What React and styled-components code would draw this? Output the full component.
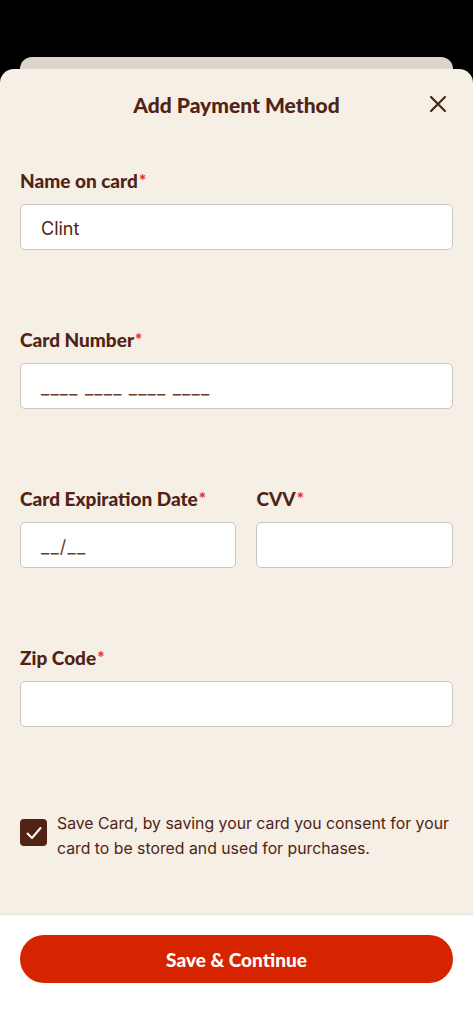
import React from 'react';
import styled, { createGlobalStyle } from 'styled-components';

const brown = '#502314';
const cream = '#f5efe6';
const red = '#d62300';

const GlobalStyle = createGlobalStyle`
  html, body {
    margin: 0;
    padding: 0;
    background: #000;
  }
  * {
    box-sizing: border-box;
  }
`;

const Screen = styled.div`
  position: relative;
  width: 473px;
  height: 1024px;
  background: #000;
  display: flex;
  flex-direction: column;
  padding-top: 57px;
  overflow: hidden;
`;

const BackCard = styled.div`
  height: 24px;
  margin: 0 20px -12px;
  background: #dcd5ca;
  border-radius: 12px 12px 0 0;
`;

const Sheet = styled.div`
  position: relative;
  flex: 1;
  display: flex;
  flex-direction: column;
  background: ${cream};
  border-radius: 14px 14px 0 0;
`;

const Header = styled.div`
  position: relative;
  height: 70px;
  display: flex;
  align-items: center;
  justify-content: center;
`;

const Title = styled.h1`
  margin: 0;
  font-family: Lato, 'Noto Sans', sans-serif;
  font-weight: 900;
  font-size: 21px;
  color: ${brown};
`;

const CloseButton = styled.button`
  position: absolute;
  right: 24px;
  top: 24px;
  width: 22px;
  height: 22px;
  padding: 0;
  border: none;
  background: none;
  display: flex;
  align-items: center;
  justify-content: center;
`;

const Form = styled.div`
  flex: 1;
  display: flex;
  flex-direction: column;
  gap: 79px;
  padding: 31px 20px 0;
`;

const Row = styled.div`
  display: flex;
  gap: 20px;
`;

const Field = styled.div`
  display: flex;
  flex-direction: column;
  gap: 12px;
  flex: ${p => (p.grow ? `${p.grow} 1 0` : 'none')};
`;

const Label = styled.label`
  font-family: Lato, 'Noto Sans', sans-serif;
  font-weight: 900;
  font-size: 19px;
  line-height: 22px;
  color: ${brown};

  span {
    color: #e4333a;
    font-size: 17px;
    vertical-align: top;
    margin-left: 1px;
  }
`;

const Input = styled.div`
  height: 46px;
  background: #fff;
  border: 1.5px solid #c9c6c2;
  border-radius: 5px;
  display: flex;
  align-items: center;
  padding: 2px 20px 0;
  font-family: Inter, 'Noto Sans', sans-serif;
  font-size: 18px;
  color: ${p => (p.$ghost ? '#6b3b2b' : brown)};
  letter-spacing: ${p => (p.$ghost ? '1.2px' : '0')};
`;

const Consent = styled.div`
  display: flex;
  gap: 10px;
  align-items: flex-start;
  margin: 5px -6px 0 0;
`;

const Checkbox = styled.div`
  flex-shrink: 0;
  width: 27px;
  height: 27px;
  margin-top: 8px;
  border-radius: 4px;
  background: ${brown};
  display: flex;
  align-items: center;
  justify-content: center;
`;

const ConsentText = styled.p`
  margin: 0;
  font-family: Inter, 'Noto Sans', sans-serif;
  font-size: 15.8px;
  line-height: 25px;
  color: ${brown};
`;

const Footer = styled.div`
  height: 110px;
  background: #fff;
  border-top: 1px solid #e6e2dc;
  padding: 20px 20px 0;
`;

const PrimaryButton = styled.button`
  width: 100%;
  height: 48px;
  border: none;
  border-radius: 24px;
  background: ${red};
  color: #fff;
  font-family: Lato, 'Noto Sans', sans-serif;
  font-weight: 900;
  font-size: 19px;
`;

const CloseIcon = () => (
  <svg width="18" height="18" viewBox="0 0 18 18" fill="none">
    <path d="M2 2L16 16M16 2L2 16" stroke={brown} strokeWidth="2.2" strokeLinecap="round" />
  </svg>
);

const CheckIcon = () => (
  <svg width="18" height="18" viewBox="0 0 18 18" fill="none">
    <path d="M2.5 9.5L7 14L15.5 4" stroke="#fff" strokeWidth="2" strokeLinecap="round" strokeLinejoin="round" />
  </svg>
);

export default function App() {
  return (
    <>
      <GlobalStyle />
      <Screen>
        <BackCard />
        <Sheet>
          <Header>
            <Title>Add Payment Method</Title>
            <CloseButton aria-label="Close">
              <CloseIcon />
            </CloseButton>
          </Header>

          <Form>
            <Field>
              <Label>Name on card<span>*</span></Label>
              <Input>Clint</Input>
            </Field>

            <Field>
              <Label>Card Number<span>*</span></Label>
              <Input $ghost>____ ____ ____ ____</Input>
            </Field>

            <Row>
              <Field grow={217}>
                <Label>Card Expiration Date<span>*</span></Label>
                <Input $ghost>__/__</Input>
              </Field>
              <Field grow={197}>
                <Label>CVV<span>*</span></Label>
                <Input />
              </Field>
            </Row>

            <Field>
              <Label>Zip Code<span>*</span></Label>
              <Input />
            </Field>

            <Consent>
              <Checkbox>
                <CheckIcon />
              </Checkbox>
              <ConsentText>
                Save Card, by saving your card you consent for your card to be stored and used for purchases.
              </ConsentText>
            </Consent>
          </Form>

          <Footer>
            <PrimaryButton>Save &amp; Continue</PrimaryButton>
          </Footer>
        </Sheet>
      </Screen>
    </>
  );
}
